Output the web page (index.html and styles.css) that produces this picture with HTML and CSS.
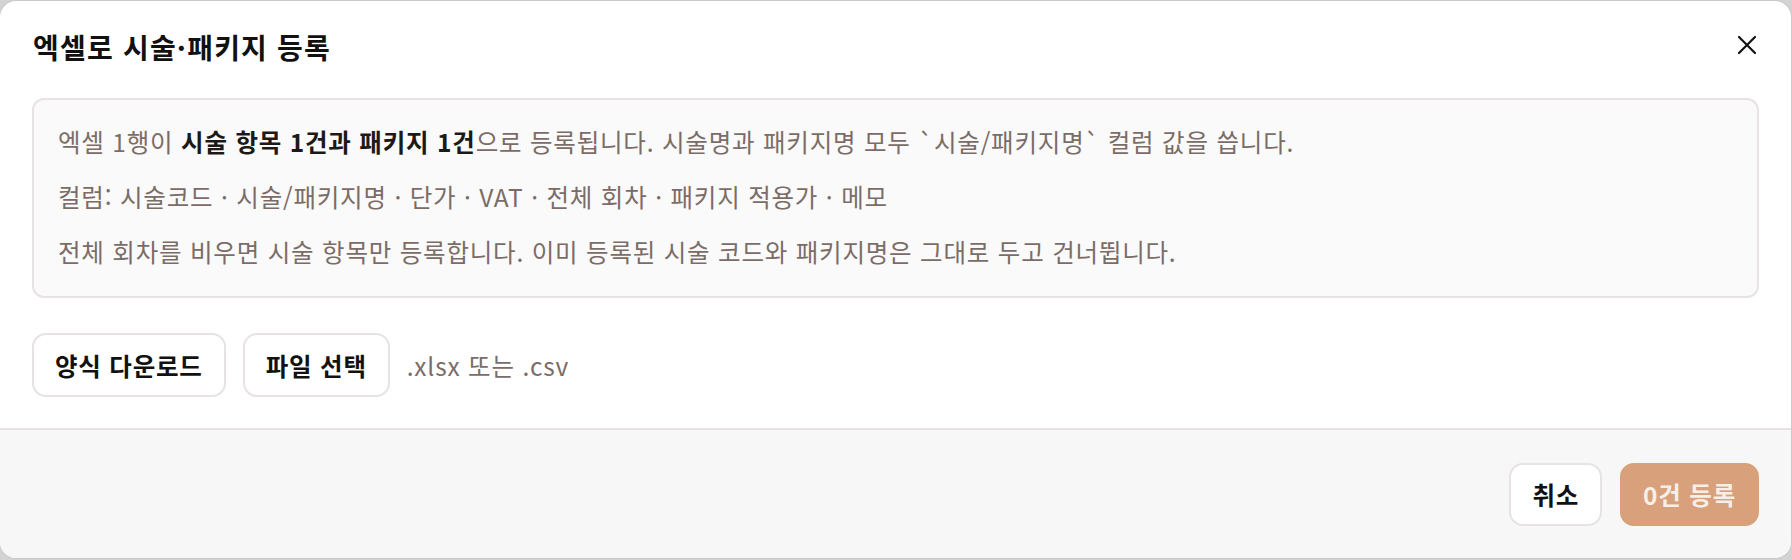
FILE: index.html
```html
<!DOCTYPE html>
<html lang="ko">
<head>
  <meta charset="UTF-8">
  <title>엑셀로 시술·패키지 등록</title>
  <link rel="stylesheet" href="styles.css">
</head>
<body>
  <div class="modal">
    <div class="modal-body">
      <div class="modal-header">
        <h2>엑셀로 시술·패키지 등록</h2>
        <button class="close-btn" aria-label="닫기">
          <svg width="20" height="20" viewBox="0 0 20 20"><path d="M2 2 L18 18 M18 2 L2 18" stroke="#111" stroke-width="2.2" stroke-linecap="round" fill="none"/></svg>
        </button>
      </div>

      <div class="info-box">
        <p>엑셀 1행이 <strong>시술 항목 1건과 패키지 1건</strong>으로 등록됩니다. 시술명과 패키지명 모두 `시술/패키지명` 컬럼 값을 씁니다.</p>
        <p>컬럼: 시술코드 · 시술/패키지명 · 단가 · VAT · 전체 회차 · 패키지 적용가 · 메모</p>
        <p>전체 회차를 비우면 시술 항목만 등록합니다. 이미 등록된 시술 코드와 패키지명은 그대로 두고 건너뜁니다.</p>
      </div>

      <div class="file-row">
        <button class="btn">양식 다운로드</button>
        <button class="btn">파일 선택</button>
        <span class="file-hint">.xlsx 또는 .csv</span>
      </div>
    </div>

    <div class="modal-footer">
      <button class="btn">취소</button>
      <button class="btn btn-primary" disabled>0건 등록</button>
    </div>
  </div>
</body>
</html>
```

FILE: styles.css
```css
body {
  margin: 0;
  height: 560px;
  background: #d4d2d2;
  font-family: "Noto Sans CJK KR", "Noto Sans", sans-serif;
  overflow: hidden;
}
.modal {
  margin-top: 1px;
  width: 1791px;
  height: 557px;
  background: #fff;
  border-radius: 16px;
  box-shadow: 0 0 2px rgba(0,0,0,0.15);
  display: flex;
  flex-direction: column;
  overflow: hidden;
}
.modal-body {
  padding: 26px 32px 31px 32px;
  flex: 1;
}
.modal-header {
  display: flex;
  justify-content: space-between;
  align-items: center;
  margin-bottom: 31px;
}
h2 {
  margin: 0;
  padding-left: 1px;
  font-size: 28px;
  line-height: 40px;
  font-weight: 700;
  letter-spacing: 1.2px;
  color: #111;
}
.close-btn {
  background: none;
  border: none;
  padding: 0;
  margin-right: 2px;
  margin-top: -4px;
  width: 20px;
  height: 20px;
  display: flex;
  cursor: pointer;
}
.info-box {
  background: #fafafa;
  border: 2px solid #e7e3e3;
  border-radius: 12px;
  padding: 22px 24px 24px;
  display: flex;
  flex-direction: column;
  gap: 15px;
}
.info-box p {
  margin: 0;
  font-size: 24.5px;
  line-height: 40px;
  letter-spacing: 0.8px;
  color: #7b6c67;
}
.info-box strong {
  color: #1c1917;
  font-weight: 700;
}
.file-row {
  display: flex;
  align-items: center;
  gap: 17px;
  margin-top: 35px;
}
.btn {
  height: 64px;
  padding: 0 21px;
  background: #fff;
  border: 2px solid #e7e3e3;
  border-radius: 14px;
  font-family: inherit;
  font-size: 24.5px;
  font-weight: 700;
  letter-spacing: 0.8px;
  color: #111;
  cursor: pointer;
}
.file-hint {
  font-size: 24.5px;
  letter-spacing: 0.8px;
  color: #7b6c67;
}
.modal-footer {
  background: #f7f7f7;
  border-top: 2px solid #e7e3e3;
  padding: 33px 32px 32px;
  display: flex;
  justify-content: flex-end;
  gap: 18px;
}
.modal-footer .btn {
  height: 63px;
}
.btn-primary {
  background: #d8a07b;
  border-color: #d8a07b;
  color: #f6efe9;
  cursor: default;
}
```
